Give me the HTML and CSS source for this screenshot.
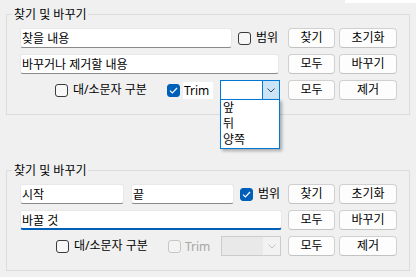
FILE: index.html
```html
<!DOCTYPE html>
<html lang="ko">
<head>
    <meta charset="UTF-8">
    <title>찾기 및 바꾸기</title>
    <link rel="stylesheet" href="styles.css">
</head>
<body>
    <div class="edge"></div>

    <fieldset class="group">
        <legend>찾기 및 바꾸기</legend>
        <div class="inner">
            <div class="row">
                <div class="fields">
                    <input class="text w-find" type="text" value="찾을 내용">
                    <label class="check gap-range"><span class="box"></span>범위</label>
                </div>
                <div class="buttons">
                    <button class="btn">찾기</button>
                    <button class="btn wide">초기화</button>
                </div>
            </div>
            <div class="row">
                <div class="fields">
                    <input class="text w-replace" type="text" value="바꾸거나 제거할 내용">
                </div>
                <div class="buttons">
                    <button class="btn">모두</button>
                    <button class="btn wide">바꾸기</button>
                </div>
            </div>
            <div class="row">
                <div class="fields options">
                    <label class="check case"><span class="box"></span>대/소문자 구분</label>
                    <label class="check trim">
                        <span class="box on">
                            <svg width="9" height="7" viewBox="0 0 9 7"><path d="M1 3.6 L3.4 6 L8 1" fill="none" stroke="#fff" stroke-width="1.2"/></svg>
                        </span>
                        <span class="trim-text hot">Trim</span>
                    </label>
                    <div class="combo open">
                        <span class="combo-value"></span>
                        <span class="combo-arrow">
                            <svg width="8" height="5" viewBox="0 0 8 5"><path d="M0.5 0.5 L4 4 L7.5 0.5" fill="none" stroke="#444"/></svg>
                        </span>
                        <ul class="list">
                            <li>앞</li>
                            <li>뒤</li>
                            <li>양쪽</li>
                        </ul>
                    </div>
                </div>
                <div class="buttons">
                    <button class="btn">모두</button>
                    <button class="btn wide">제거</button>
                </div>
            </div>
        </div>
    </fieldset>

    <fieldset class="group">
        <legend>찾기 및 바꾸기</legend>
        <div class="inner">
            <div class="row">
                <div class="fields">
                    <input class="text w-start" type="text" value="시작">
                    <input class="text w-end" type="text" value="끝">
                    <label class="check gap-range"><span class="box on">
                        <svg width="9" height="7" viewBox="0 0 9 7"><path d="M1 3.6 L3.4 6 L8 1" fill="none" stroke="#fff" stroke-width="1.2"/></svg>
                    </span>범위</label>
                </div>
                <div class="buttons">
                    <button class="btn">찾기</button>
                    <button class="btn wide">초기화</button>
                </div>
            </div>
            <div class="row">
                <div class="fields">
                    <input class="text w-replace2 focus" type="text" value="바꿀 것">
                </div>
                <div class="buttons">
                    <button class="btn">모두</button>
                    <button class="btn wide">바꾸기</button>
                </div>
            </div>
            <div class="row">
                <div class="fields options second">
                    <label class="check case"><span class="box"></span>대/소문자 구분</label>
                    <label class="check trim disabled">
                        <span class="box"></span>
                        <span class="trim-text">Trim</span>
                    </label>
                    <div class="combo off">
                        <span class="combo-value"></span>
                        <span class="combo-arrow">
                            <svg width="8" height="5" viewBox="0 0 8 5"><path d="M0.5 0.5 L4 4 L7.5 0.5" fill="none" stroke="#c2c2c2"/></svg>
                        </span>
                    </div>
                </div>
                <div class="buttons">
                    <button class="btn">모두</button>
                    <button class="btn wide">제거</button>
                </div>
            </div>
        </div>
    </fieldset>
</body>
</html>
```

FILE: styles.css
```css
* {
    box-sizing: border-box;
}

body {
    margin: 0;
    background-color: #f0f0f0;
    font-family: "Noto Sans", "Noto Sans CJK KR", sans-serif;
    font-size: 12px;
    line-height: 16px;
    color: #000;
    position: relative;
}

.edge {
    position: absolute;
    top: 0;
    right: 0;
    width: 71px;
    height: 3px;
    background-color: #fff;
}

.group {
    margin: 6px 0 0 6px;
    padding: 0;
    width: 404px;
    min-width: 0;
    border: 1px solid #dcdcdc;
}

.group + .group {
    margin-top: 47px;
}

.group legend {
    margin-left: 5px;
    padding: 0 2px;
    line-height: 17px;
}

.inner {
    padding: 5px 0 14px 13px;
}

.row {
    display: flex;
    align-items: center;
    height: 20px;
}

.row + .row {
    margin-top: 6px;
}

.fields {
    width: 268px;
    display: flex;
    align-items: center;
}

.buttons {
    display: flex;
    gap: 4px;
}

/* text boxes */
.text {
    height: 20px;
    margin: 0;
    padding: 0 1px;
    border: 1px solid #e8e8e8;
    border-bottom-color: #8a8a8a;
    border-radius: 3px;
    background-color: #fff;
    font: inherit;
    color: #000;
    outline: none;
}

.text.focus {
    border-bottom: 2px solid #005fb8;
}

.w-find { width: 212px; }
.w-replace { width: 259px; }
.w-start { width: 104px; }
.w-end { width: 103px; margin-left: 7px; }
.w-replace2 { width: 262px; }

/* buttons */
.btn {
    width: 47px;
    height: 20px;
    padding: 0;
    border: 1px solid #d0d0d0;
    border-bottom-color: #c2c2c2;
    border-radius: 4px;
    background-color: #fdfdfd;
    font: inherit;
    color: #000;
}

.btn.wide {
    width: 58px;
}

/* check boxes */
.check {
    display: flex;
    align-items: center;
    gap: 5px;
    white-space: nowrap;
}

.gap-range {
    margin-left: 6px;
}

.box {
    width: 13px;
    height: 13px;
    border: 1px solid #3b3b3b;
    border-radius: 3px;
    background-color: #f7f7f7;
    display: flex;
    align-items: center;
    justify-content: center;
}

.box.on {
    border-color: #005fb8;
    background-color: #005fb8;
}

.options {
    padding-left: 35px;
}

.options.second {
    padding-left: 36px;
}

.check.case {
    width: 112px;
}

.check.trim {
    gap: 3px;
}

.trim-text {
    width: 30px;
    height: 17px;
    padding-left: 1px;
    line-height: 17px;
}

.trim-text.hot {
    background-color: #fff;
}

.check.disabled {
    color: #a6a6a6;
}

.check.disabled .box {
    border-color: #c6c6c6;
    background-color: #f3f3f3;
}

/* combo box */
.combo {
    position: relative;
    width: 60px;
    height: 20px;
    margin-left: 7px;
    display: flex;
    border: 1px solid #0078d7;
    background-color: #fff;
}

.combo-value {
    flex: 1;
}

.combo-arrow {
    width: 17px;
    display: flex;
    align-items: center;
    justify-content: center;
    border-left: 1px solid #0078d7;
    background-color: #cce4f7;
}

.combo.off {
    border-color: #cccccc;
    background-color: #e9e9e9;
}

.combo.off .combo-arrow {
    border-left: none;
    background-color: #f2f2f2;
}

.list {
    position: absolute;
    top: 18px;
    left: -1px;
    width: 60px;
    margin: 0;
    padding: 0;
    list-style: none;
    border: 1px solid #0078d7;
    background-color: #fff;
    box-shadow: 2px 2px 3px rgba(0, 0, 0, 0.3);
    z-index: 2;
}

.list li {
    height: 16px;
    line-height: 16px;
    padding-left: 2px;
}
```
